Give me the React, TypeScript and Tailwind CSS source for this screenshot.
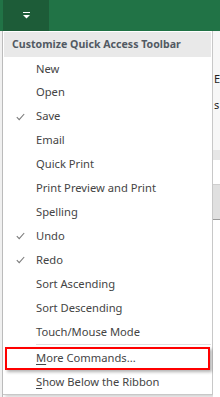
import React from 'react';

type Item = { label: string; checked?: boolean };

const items: Item[] = [
  { label: 'New' },
  { label: 'Open' },
  { label: 'Save', checked: true },
  { label: 'Email' },
  { label: 'Quick Print' },
  { label: 'Print Preview and Print' },
  { label: 'Spelling' },
  { label: 'Undo', checked: true },
  { label: 'Redo', checked: true },
  { label: 'Sort Ascending' },
  { label: 'Sort Descending' },
  { label: 'Touch/Mouse Mode' },
];

const Check = () => (
  <svg width="9" height="8" viewBox="0 0 9 8" className="block">
    <path d="M0.8 4.2 L3.2 6.6 L8.2 1" fill="none" stroke="#7a7a7a" strokeWidth="1.1" />
  </svg>
);

const QatIcon = () => (
  <svg width="7" height="7" viewBox="0 0 7 7" className="block">
    <rect x="0" y="0" width="7" height="1" fill="#fff" />
    <path d="M0 3 H7 L3.5 6.5 Z" fill="#fff" />
  </svg>
);

const Row = ({ item }: { item: Item }) => (
  <div className="h-[24px] flex items-center">
    <div className="w-[33px] flex justify-center pl-[3px]">{item.checked && <Check />}</div>
    <span>{item.label}</span>
  </div>
);

export default function App() {
  return (
    <div
      className="w-[220px] h-[397px] overflow-hidden flex flex-col bg-white text-[11.2px] text-[#444]"
      style={{ fontFamily: '"Noto Sans", "Open Sans", sans-serif' }}
    >
      <div className="h-[31px] bg-[#217346] flex shrink-0">
        <div className="w-[3px]" />
        <div className="w-[46px] bg-[#1d5c38] flex items-center justify-center">
          <QatIcon />
        </div>
      </div>
      <div className="flex-1 flex">
        <div className="w-[3px] bg-[#f0f0f0] border-r border-[#bdbdbd]" />
        <div className="w-[211px] flex flex-col border-r border-b border-[#c8c8c8] shadow-[2px_2px_3px_rgba(0,0,0,0.18)] h-[364px]">
          <div className="h-[25px] mt-[1px] mx-[1px] bg-[#e9e9e9] flex items-center pl-[8px] font-bold text-[10.6px] text-[#525a63]">
            Customize Quick Access Toolbar
          </div>
          {items.map((it) => (
            <Row key={it.label} item={it} />
          ))}
          <div className="h-[1px] bg-[#e0e0e0] ml-[33px] mr-[1px]" />
          <div className="h-[23px] mt-[2px] mx-[2px] border-2 border-[#ff0000] shadow-[2px_2px_3px_rgba(0,0,0,0.3)] flex items-center pl-[29px]">
            <span>
              <span className="underline underline-offset-2">M</span>ore Commands...
            </span>
          </div>
          <div className="h-[24px] flex items-center pl-[33px]">
            <span>
              <span className="underline underline-offset-2">S</span>how Below the Ribbon
            </span>
          </div>
        </div>
        <div className="flex-1 bg-[#f7f7f7] flex flex-col text-[11px] text-[#222] leading-none">
          <div className="h-[42px]" />
          <div className="h-[26px] pl-[1px]">E</div>
          <div className="h-[51px] pl-[1px]">s</div>
          <div className="h-[10px] bg-[#e6e6e6]" />
          <div className="h-[25px] bg-white border-b border-[#cfcfcf]" />
          <div className="h-[35px] bg-[#e0e0e0] border-b border-[#9a9a9a]" />
          <div className="flex-1 bg-white" />
        </div>
      </div>
    </div>
  );
}
